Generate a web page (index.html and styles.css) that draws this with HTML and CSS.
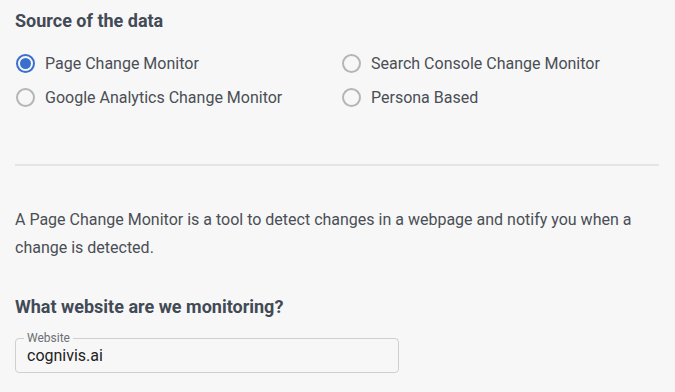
FILE: index.html
```html
<!DOCTYPE html>
<html lang="en">
<head>
    <meta charset="UTF-8">
    <meta name="viewport" content="width=device-width, initial-scale=1.0">
    <title>Change Monitor</title>
    <link rel="stylesheet" href="styles.css">
</head>
<body>
    <section class="source">
        <h2>Source of the data</h2>
        <div class="radio-grid">
            <label class="radio checked"><span class="dot"></span>Page Change Monitor</label>
            <label class="radio"><span class="dot"></span>Search Console Change Monitor</label>
            <label class="radio"><span class="dot"></span>Google Analytics Change Monitor</label>
            <label class="radio"><span class="dot"></span>Persona Based</label>
        </div>
    </section>

    <hr class="divider">

    <p class="desc">A Page Change Monitor is a tool to detect changes in a webpage and notify you when a change is detected.</p>

    <section class="site">
        <h2>What website are we monitoring?</h2>
        <fieldset class="field">
            <legend>Website</legend>
            <div class="value">cognivis.ai</div>
        </fieldset>
    </section>
</body>
</html>
```

FILE: styles.css
```css
body {
    margin: 0;
    padding: 0 16px 0 15px;
    background-color: #f7f7f7;
    font-family: Roboto, 'Liberation Sans', sans-serif;
    color: #4a4e55;
}
h2 {
    margin: 0;
    font-size: 18px;
    font-weight: bold;
    line-height: 24px;
    color: #424a55;
}
.source h2 {
    padding-top: 9px;
}
.radio-grid {
    display: grid;
    grid-template-columns: 326px 1fr;
    margin-top: 13px;
}
.radio {
    display: flex;
    align-items: center;
    height: 34px;
    font-size: 16px;
    color: #4a4e55;
}
.dot {
    width: 15px;
    height: 15px;
    border: 2px solid #b5b5b5;
    border-radius: 50%;
    margin: 0 10px 0 1px;
    box-sizing: content-box;
    position: relative;
}
.checked .dot {
    border-color: #3a6fcf;
}
.checked .dot::after {
    content: "";
    position: absolute;
    left: 2px;
    top: 2px;
    width: 11px;
    height: 11px;
    border-radius: 50%;
    background-color: #3a6fcf;
}
.divider {
    margin: 50px 0 0;
    border: none;
    border-top: 2px solid #e4e4e4;
}
.desc {
    margin: 40px 0 0;
    font-size: 16px;
    line-height: 28px;
    color: #4a4e55;
}
.site h2 {
    margin-top: 33px;
}
.field {
    width: 384px;
    margin: 12px 0 0;
    padding: 1px 11px 6px;
    border: 1px solid #cfcfcf;
    border-radius: 4px;
    box-sizing: border-box;
}
.field legend {
    padding: 0 3px;
    margin-left: -3px;
    font-size: 12px;
    line-height: 14px;
    color: #6b6f75;
}
.value {
    font-size: 16px;
    line-height: 20px;
    color: #222;
}
```
